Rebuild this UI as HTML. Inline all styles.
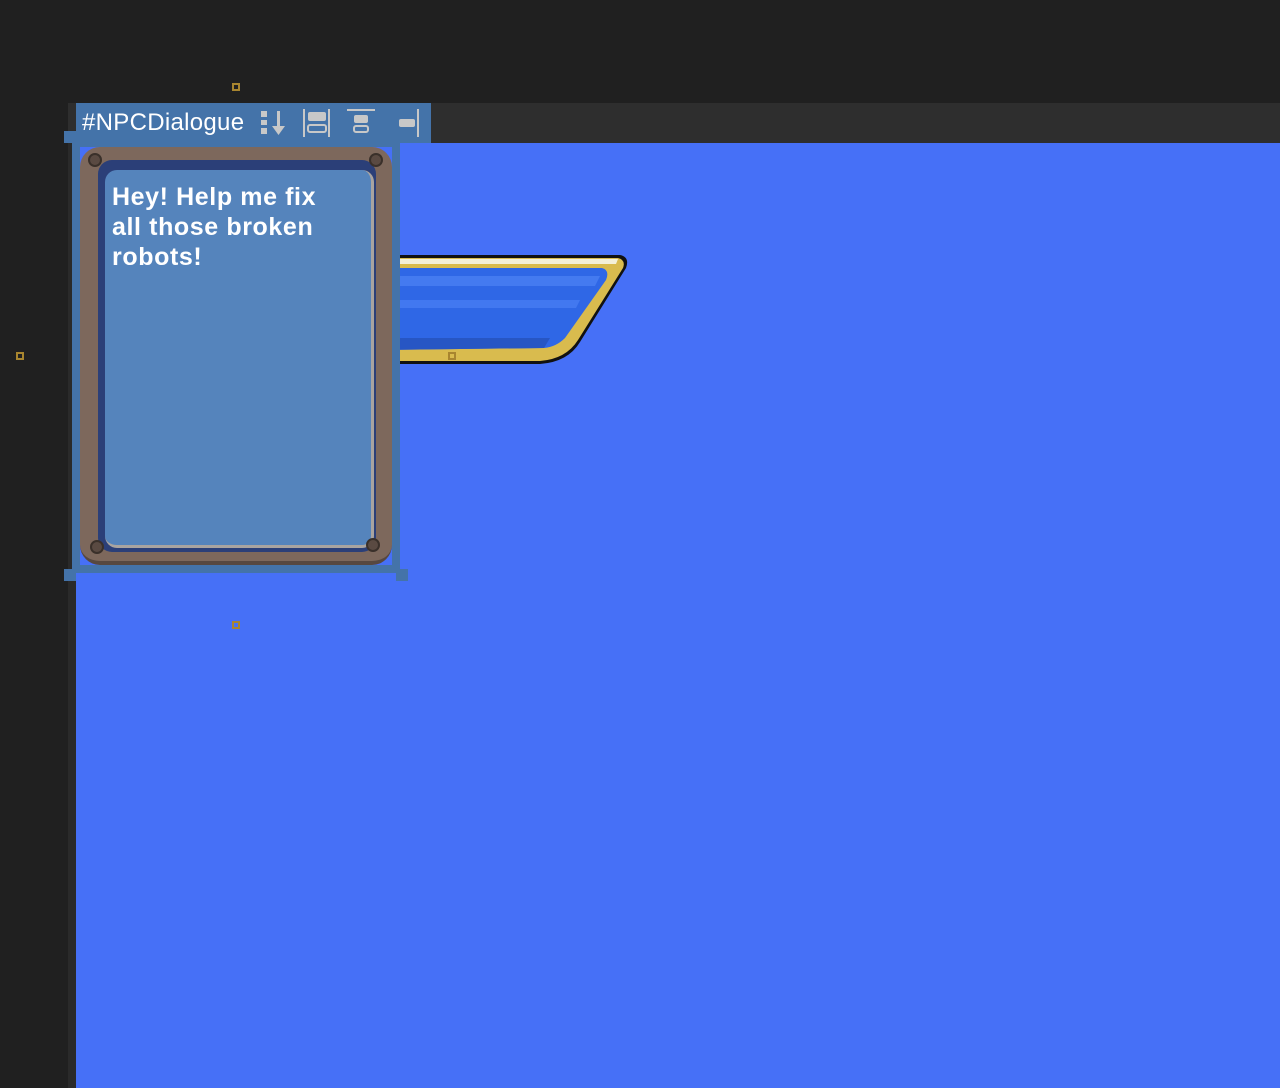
<!DOCTYPE html>
<html><head><style>
body{margin:0;width:1280px;height:1088px;background:#202020;position:relative;overflow:hidden;font-family:"Liberation Sans",sans-serif}
div{position:absolute;box-sizing:border-box}
.h{width:8px;height:8px;border:2px solid #a8852f}
</style></head><body>
<div style="left:68px;top:103px;width:1212px;height:40px;background:#2e2e2e"></div>
<div style="left:68px;top:143px;width:8px;height:945px;background:#2a2a2a"></div>
<div style="left:76px;top:143px;width:1204px;height:945px;background:#4670f7"></div>
<svg style="position:absolute;left:380px;top:250px" width="260" height="120">
<path d="M0 5 L240 5 Q250 7 246 18 L200 92 Q188 112 160 114 L0 114 Z" fill="#111"/>
<path d="M0 8 L238 8 Q246 10 243 18 L198 90 Q186 109 160 111 L0 111 Z" fill="#d9bb4e"/>
<path d="M0 9 L238 9 L236 14 L0 14 Z" fill="#f4f0d8"/>
<path d="M0 18 L222 18 Q230 20 226 30 L185 88 Q176 97 164 98 L0 100 Z" fill="#2f67e6"/>
<path d="M0 26 L220 26 L215 36 L0 36 Z" fill="#4a80f3" opacity=".8"/>
<path d="M0 50 L200 50 L196 58 L0 58 Z" fill="#4a80f3" opacity=".7"/>
<path d="M0 88 L170 88 L164 98 L0 100 Z" fill="#2756c4"/>
</svg>
<div style="left:76px;top:103px;width:355px;height:40px;background:#4473a9"></div>
<div style="left:72px;top:143px;width:328px;height:430px;border:8px solid #4473a9;border-top:4px solid #4473a9"></div>
<div style="left:64px;top:131px;width:12px;height:12px;background:#4473a9"></div>
<div style="left:64px;top:569px;width:12px;height:12px;background:#4473a9"></div>
<div style="left:396px;top:569px;width:12px;height:12px;background:#4473a9"></div>
<div style="left:80px;top:147px;width:312px;height:418px;background:#4670f7"></div>
<div style="left:80px;top:147px;width:312px;height:418px;background:#7d685c;border-radius:20px;border-bottom:4px solid #574840"></div>
<div style="left:98px;top:160px;width:278px;height:392px;background:#2b3f78;border-radius:14px"></div>
<div style="left:105px;top:170px;width:269px;height:378px;background:#5584bc;border-radius:12px;border-right:3px solid #a9a4a0;border-bottom:3px solid #a9a4a0"></div>
<div style="left:88px;top:153px;width:14px;height:14px;border-radius:50%;background:#5a4a42;border:2px solid #3a302a"></div>
<div style="left:369px;top:153px;width:14px;height:14px;border-radius:50%;background:#5a4a42;border:2px solid #3a302a"></div>
<div style="left:90px;top:540px;width:14px;height:14px;border-radius:50%;background:#5a4a42;border:2px solid #3a302a"></div>
<div style="left:366px;top:538px;width:14px;height:14px;border-radius:50%;background:#5a4a42;border:2px solid #3a302a"></div>
<div style="left:112px;top:182px;width:228px;color:#fff;font-weight:bold;font-size:25px;line-height:30px;letter-spacing:.6px">Hey! Help me fix all those broken robots!</div>
<div style="left:82px;top:108px;color:#fff;font-size:24px;line-height:30px;letter-spacing:.3px">#NPCDialogue</div>
<svg style="position:absolute;left:258px;top:108px" width="170" height="30" fill="#c8c8c8">
<rect x="3" y="3" width="6" height="6"/><rect x="3" y="12" width="6" height="5"/><rect x="3" y="20" width="6" height="6"/>
<rect x="19" y="3" width="3" height="18"/><path d="M14 18 L27 18 L20.5 27 Z"/>
<rect x="45" y="1" width="2" height="28"/><rect x="70" y="1" width="2" height="28"/>
<rect x="50" y="4" width="18" height="9" rx="2"/><rect x="50" y="17" width="18" height="7" rx="2" fill="none" stroke="#c8c8c8" stroke-width="2"/>
<rect x="89" y="1" width="28" height="2"/>
<rect x="96" y="7" width="14" height="8" rx="2"/><rect x="96" y="18" width="14" height="6" rx="2" fill="none" stroke="#c8c8c8" stroke-width="2"/>
<rect x="159" y="1" width="2" height="28"/><rect x="141" y="11" width="16" height="8" rx="2"/>
</svg>
<div class="h" style="left:232px;top:83px"></div>
<div class="h" style="left:232px;top:621px"></div>
<div class="h" style="left:16px;top:352px"></div>
<div class="h" style="left:448px;top:352px"></div>
</body></html>
